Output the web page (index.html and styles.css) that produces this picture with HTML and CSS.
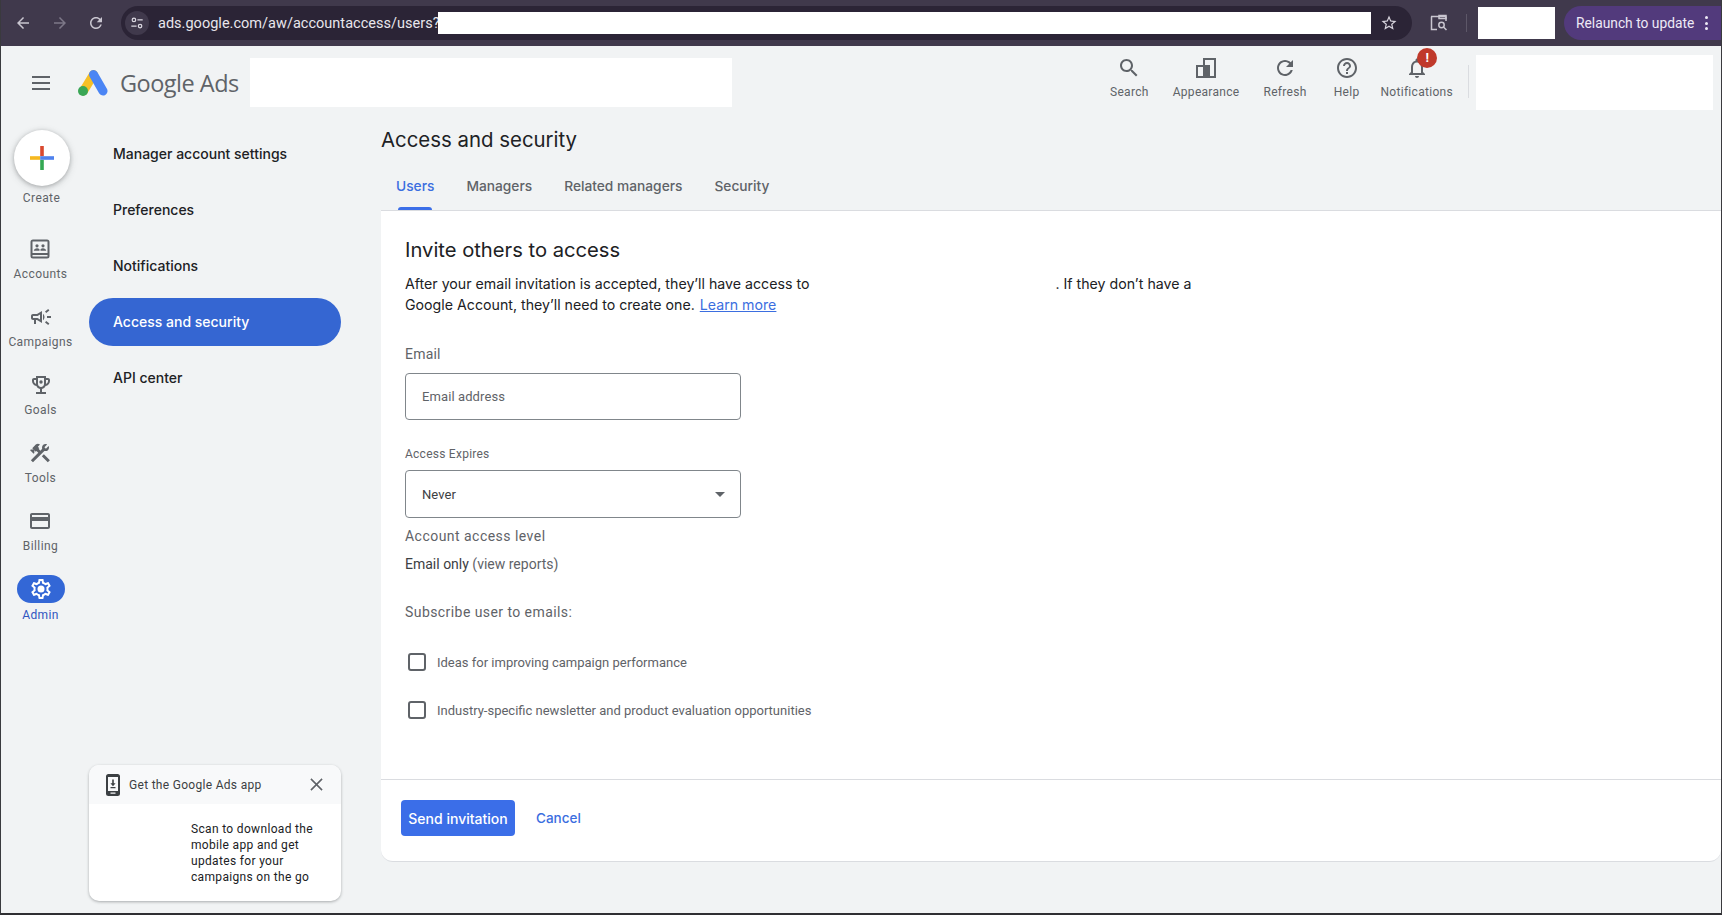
FILE: index.html
```html
<!DOCTYPE html>
<html lang="en">
<head>
<meta charset="utf-8">
<title>Access and security - Google Ads</title>
<link rel="stylesheet" href="styles.css">
</head>
<body>
<div class="window">
  <header class="chrome">
    <div class="chrome-nav">
      <svg class="c-icon" viewBox="0 0 24 24"><path d="M20 11H7.8l5.6-5.6L12 4l-8 8 8 8 1.4-1.4L7.8 13H20z"/></svg>
      <svg class="c-icon dim" viewBox="0 0 24 24"><path d="M4 11h12.2l-5.6-5.6L12 4l8 8-8 8-1.4-1.4 5.6-5.6H4z"/></svg>
      <svg class="c-icon" viewBox="0 0 24 24"><path d="M17.65 6.35C16.2 4.9 14.21 4 12 4c-4.42 0-7.99 3.58-7.99 8s3.57 8 7.99 8c3.73 0 6.84-2.55 7.73-6h-2.08c-.82 2.33-3.04 4-5.65 4-3.31 0-6-2.69-6-6s2.69-6 6-6c1.66 0 3.14.69 4.22 1.78L13 11h7V4l-2.35 2.35z"/></svg>
    </div>
    <div class="omnibox">
      <span class="tune">
        <svg viewBox="0 0 16 16" class="tune-svg"><circle cx="4.5" cy="4.5" r="2"/><path d="M8.5 4.5h6M1.5 11.5h6"/><circle cx="11.5" cy="11.5" r="2"/></svg>
      </span>
      <span class="url">ads.google.com/aw/accountaccess/users?</span>
      <span class="url-mask"></span>
      <svg class="star" viewBox="0 0 24 24"><path d="M22 9.24l-7.19-.62L12 2 9.19 8.63 2 9.24l5.46 4.73L5.82 21 12 17.27 18.18 21l-1.63-7.03L22 9.24zM12 15.4l-3.76 2.27 1-4.28-3.32-2.88 4.38-.38L12 6.1l1.71 4.04 4.38.38-3.32 2.88 1 4.28L12 15.4z"/></svg>
    </div>
    <svg class="tabsearch" viewBox="0 0 18 18"><path d="M1 2.5h15M1.5 2.5v13H7M16 2.5V7"/><rect x="9" y="1.5" width="7" height="3"/><circle cx="11.5" cy="11" r="2.7"/><path d="M13.5 13l3 3"/></svg>
    <span class="chrome-sep"></span>
    <span class="profile-mask"></span>
    <div class="relaunch"><span>Relaunch to update</span><span class="kebab"><i></i><i></i><i></i></span></div>
  </header>

  <div class="topbar">
    <div class="burger"><i></i><i></i><i></i></div>
    <svg class="logo" viewBox="0 0 30 27">
      <path class="logo-y" d="M15.5 5.5 5.5 22"/>
      <path class="logo-b" d="M15.5 5.5 25 22"/>
      <circle class="logo-g" cx="5" cy="22" r="5"/>
    </svg>
    <span class="brand">Google Ads</span>
    <span class="account-mask"></span>
    <nav class="tools">
      <a class="tool">
        <svg class="icon" viewBox="0 0 24 24"><path d="M15.5 14h-.79l-.28-.27C15.41 12.59 16 11.11 16 9.5 16 5.91 13.09 3 9.5 3S3 5.91 3 9.5 5.91 16 9.5 16c1.61 0 3.09-.59 4.23-1.57l.27.28v.79l5 4.99L20.49 19l-4.99-5zm-6 0C7.01 14 5 11.99 5 9.5S7.01 5 9.5 5 14 7.01 14 9.5 11.99 14 9.5 14z"/></svg>
        <span>Search</span>
      </a>
      <a class="tool">
        <svg class="icon" viewBox="0 0 24 24"><path d="M9 2h13v20H2V9h7V2zm2 2v16h9V4h-9zM4 11v9h5v-9H4z" fill-rule="evenodd"/><path d="M11 9h5v11h-5z"/></svg>
        <span>Appearance</span>
      </a>
      <a class="tool">
        <svg class="icon" viewBox="0 0 24 24"><path d="M17.65 6.35C16.2 4.9 14.21 4 12 4c-4.42 0-7.99 3.58-7.99 8s3.57 8 7.99 8c3.73 0 6.84-2.55 7.73-6h-2.08c-.82 2.33-3.04 4-5.65 4-3.31 0-6-2.69-6-6s2.69-6 6-6c1.66 0 3.14.69 4.22 1.78L13 11h7V4l-2.35 2.35z"/></svg>
        <span>Refresh</span>
      </a>
      <a class="tool tool-help">
        <svg class="icon" viewBox="0 0 24 24"><path d="M11 18h2v-2h-2v2zm1-16C6.48 2 2 6.48 2 12s4.48 10 10 10 10-4.48 10-10S17.52 2 12 2zm0 18c-4.41 0-8-3.59-8-8s3.59-8 8-8 8 3.59 8 8-3.59 8-8 8zm0-14c-2.21 0-4 1.79-4 4h2c0-1.1.9-2 2-2s2 .9 2 2c0 2-3 1.75-3 5h2c0-2.25 3-2.5 3-5 0-2.21-1.79-4-4-4z"/></svg>
        <span>Help</span>
      </a>
      <a class="tool tool-bell">
        <svg class="icon" viewBox="0 0 24 24"><path d="M12 22c1.1 0 2-.9 2-2h-4c0 1.1.9 2 2 2zm6-6v-5c0-3.07-1.63-5.64-4.5-6.32V4c0-.83-.67-1.5-1.5-1.5s-1.5.67-1.5 1.5v.68C7.64 5.36 6 7.92 6 11v5l-2 2v1h16v-1l-2-2zm-2 1H8v-6c0-2.48 1.51-4.5 4-4.5s4 2.02 4 4.5v6z"/></svg>
        <b class="badge">!</b>
        <span>Notifications</span>
      </a>
    </nav>
    <span class="tool-sep"></span>
    <span class="user-mask"></span>
  </div>

  <div class="workspace">
    <aside class="rail">
      <a class="rail-create">
        <span class="fab">
          <svg viewBox="0 0 24 24" class="plus">
            <rect x="10.2" width="3.6" height="10.2" fill="#d9492f"/>
            <rect y="10.2" width="10.2" height="3.6" fill="#f6b81f"/>
            <rect x="10.2" y="13.8" width="3.6" height="10.2" fill="#34a853"/>
            <rect x="10.2" y="10.2" width="13.8" height="3.6" fill="#4f82ee"/>
          </svg>
        </span>
        <span>Create</span>
      </a>
      <a class="rail-item">
        <svg class="icon" viewBox="0 0 24 24"><path d="M5 2.5h14A2.5 2.5 0 0 1 21.5 5v14a2.5 2.5 0 0 1-2.5 2.5H5A2.5 2.5 0 0 1 2.5 19V5A2.5 2.5 0 0 1 5 2.5zm-.5 2V16h15V4.500zm0 13.500v1.500h15V18z" fill-rule="evenodd"/><circle cx="9" cy="8.800" r="1.600"/><circle cx="15" cy="8.800" r="1.600"/><path d="M5.800 13.800c0-1.600 1.800-2.500 3.200-2.500.9 0 1.900.3 2.500.9v1.600zM12.500 12.200c.6-.6 1.600-.9 2.500-.9 1.400 0 3.200.9 3.200 2.500h-5.700z"/></svg>
        <span>Accounts</span>
      </a>
      <a class="rail-item">
        <svg class="icon" viewBox="0 0 24 24"><path d="M18 11v2h4v-2h-4zm-2 6.610c.96.710 2.210 1.650 3.200 2.390.4-.530.8-1.070 1.200-1.600-.99-.740-2.240-1.680-3.200-2.400-.4.540-.8 1.080-1.200 1.610zM20.400 5.600c-.4-.530-.8-1.070-1.200-1.600-.99.740-2.240 1.680-3.200 2.400.4.530.8 1.070 1.200 1.600.96-.720 2.210-1.650 3.200-2.400zM4 9c-1.100 0-2 .9-2 2v2c0 1.100.9 2 2 2h1v4h2v-4h1l5 3V6L8 9H4zm5.030 1.710L11 9.530v4.940l-1.970-1.180-.48-.29H4v-2h4.550l.48-.29zM15.500 12c0-1.330-.58-2.530-1.500-3.350v6.690c.92-.81 1.500-2.010 1.500-3.340z"/></svg>
        <span>Campaigns</span>
      </a>
      <a class="rail-item">
        <svg class="icon" viewBox="0 0 24 24"><path d="M19 5h-2V3H7v2H5c-1.100 0-2 .9-2 2v1c0 2.550 1.920 4.630 4.390 4.940.63 1.500 1.980 2.630 3.610 2.960V19H7v2h10v-2h-4v-3.100c1.630-.33 2.980-1.460 3.610-2.960C19.080 12.630 21 10.550 21 8V7c0-1.100-.9-2-2-2zM5 8V7h2v3.820C5.840 10.400 5 9.300 5 8zm14 0c0 1.300-.84 2.400-2 2.820V7h2v1zm-7 6c-1.650 0-3-1.350-3-3V5h6v6c0 1.650-1.350 3-3 3z"/><circle cx="12" cy="9" r="1.700"/></svg>
        <span>Goals</span>
      </a>
      <a class="rail-item">
        <svg class="icon" viewBox="0 0 24 24"><path d="M13.780 15.300L19.780 21.300L21.890 19.140L15.890 13.140L13.780 15.300ZM17.500 10.100C17.110 10.100 16.690 10.050 16.360 9.910L4.970 21.250L2.860 19.140L10.270 11.740L8.500 9.960L7.780 10.660L6.330 9.250V12.110L5.630 12.810L2.110 9.250L2.810 8.550H5.620L4.220 7.140L7.780 3.580C8.950 2.410 10.830 2.410 12 3.580L9.890 5.740L11.300 7.140L10.590 7.850L12.380 9.630L14.200 7.750C14.060 7.420 14 7 14 6.630C14 4.660 15.560 3.110 17.500 3.110C18.090 3.110 18.610 3.250 19.080 3.530L16.410 6.200L17.910 7.700L20.580 5.030C20.860 5.500 21 6 21 6.630C21 8.550 19.450 10.100 17.500 10.100Z"/></svg>
        <span>Tools</span>
      </a>
      <a class="rail-item">
        <svg class="icon" viewBox="0 0 24 24"><path d="M20 4H4c-1.110 0-1.990.89-1.990 2L2 18c0 1.110.89 2 2 2h16c1.110 0 2-.89 2-2V6c0-1.110-.89-2-2-2zm0 14H4v-6h16v6zm0-10H4V6h16v2z"/></svg>
        <span>Billing</span>
      </a>
      <a class="rail-item rail-active">
        <span class="rail-pill">
          <svg class="icon" viewBox="0 0 24 24"><path d="M19.430 12.980c.04-.32.07-.64.07-.98 0-.34-.03-.66-.07-.98l2.110-1.650c.19-.15.24-.42.12-.64l-2-3.460c-.09-.16-.26-.25-.44-.25-.06 0-.12.01-.17.03l-2.490 1c-.52-.4-1.080-.73-1.690-.98l-.38-2.650C14.460 2.180 14.250 2 14 2h-4c-.25 0-.46.18-.49.42l-.38 2.650c-.61.25-1.170.59-1.690.98l-2.490-1c-.06-.02-.12-.03-.18-.03-.17 0-.34.09-.43.25l-2 3.460c-.13.22-.07.49.12.64l2.110 1.650c-.04.32-.07.65-.07.98 0 .33.03.66.07.98l-2.110 1.650c-.19.15-.24.42-.12.64l2 3.460c.09.16.26.25.44.25.06 0 .12-.01.17-.03l2.490-1c.52.4 1.080.73 1.690.98l.38 2.650c.03.24.24.42.49.42h4c.25 0 .46-.18.49-.42l.38-2.650c.61-.25 1.170-.59 1.690-.98l2.490 1c.06.02.12.03.18.03.17 0 .34-.09.43-.25l2-3.460c.12-.22.07-.49-.12-.64l-2.110-1.650zm-1.980-1.710c.04.31.05.52.05.730 0 .21-.02.43-.05.73l-.14 1.130.89.7 1.080.84-.7 1.210-1.270-.51-1.040-.42-.9.68c-.43.32-.84.56-1.250.73l-1.060.43-.16 1.130-.2 1.350h-1.400l-.19-1.350-.16-1.130-1.060-.43c-.43-.18-.83-.41-1.230-.71l-.91-.7-1.060.43-1.270.51-.7-1.210 1.080-.84.89-.7-.14-1.130c-.03-.31-.05-.54-.05-.74s.02-.43.05-.73l.14-1.130-.89-.7-1.080-.84.7-1.210 1.270.51 1.040.42.9-.68c.43-.32.84-.56 1.250-.73l1.060-.43.16-1.130.2-1.350h1.390l.19 1.350.16 1.130 1.060.43c.43.18.83.41 1.230.71l.91.7 1.060-.43 1.270-.51.7 1.210-1.070.85-.89.7.14 1.130z"/><circle cx="12" cy="12" r="3.500"/></svg>
        </span>
        <span>Admin</span>
      </a>
    </aside>

    <aside class="sidenav">
      <a class="side-link"><span>Manager account settings</span></a>
      <a class="side-link"><span>Preferences</span></a>
      <a class="side-link"><span>Notifications</span></a>
      <a class="side-link side-active"><span>Access and security</span></a>
      <a class="side-link"><span>API center</span></a>
      <section class="app-promo">
        <div class="promo-head">
          <svg class="phone" viewBox="0 0 14 22"><path d="M2.500 0h9A2.500 2.500 0 0 1 14 2.500v17a2.500 2.500 0 0 1-2.500 2.500h-9A2.500 2.500 0 0 1 0 19.500v-17A2.500 2.500 0 0 1 2.500 0zM2 3v14h10V3zm2.500 15.500v1.300h5v-1.300z" fill-rule="evenodd"/><path d="M6.200 5.500h1.600v3.700h1.800L7 12.200 4.400 9.200h1.800zM4.500 13h5v1.200h-5z"/></svg>
          <span class="promo-title">Get the Google Ads app</span>
          <svg class="promo-close" viewBox="0 0 14 14"><path d="M1 1l12 12M13 1L1 13"/></svg>
        </div>
        <p class="promo-text">Scan to download the mobile app and get updates for your campaigns on the go</p>
      </section>
    </aside>

    <main class="main">
      <h1 class="page-title">Access and security</h1>
      <div class="tabs">
        <a class="tab tab-active">Users</a>
        <a class="tab">Managers</a>
        <a class="tab">Related managers</a>
        <a class="tab">Security</a>
      </div>
      <section class="card">
        <div class="card-body">
          <h2 class="card-title">Invite others to access</h2>
          <p class="intro">After your email invitation is accepted, they’ll have access to<span class="redacted"></span>. If they don’t have a<br>Google Account, they’ll need to create one. <a class="link">Learn more</a></p>
          <div class="label-email">Email</div>
          <div class="field field-email"><span class="placeholder">Email address</span></div>
          <div class="label-expires">Access Expires</div>
          <div class="field field-select"><span class="value">Never</span><i class="caret"></i></div>
          <div class="label-level">Account access level</div>
          <div class="level">Email only <span>(view reports)</span></div>
          <div class="label-sub">Subscribe user to emails:</div>
          <label class="check first"><i class="box"></i><span>Ideas for improving campaign performance</span></label>
          <label class="check"><i class="box"></i><span>Industry-specific newsletter and product evaluation opportunities</span></label>
        </div>
        <footer class="card-foot">
          <a class="btn">Send invitation</a>
          <a class="cancel">Cancel</a>
        </footer>
      </section>
    </main>
  </div>
</div>
</body>
</html>
```

FILE: styles.css
```css
* { box-sizing: border-box; }
html, body { margin: 0; height: 100%; }
body { font-family: "Roboto", "Liberation Sans", sans-serif; background: #2f2f33; overflow: hidden; }
a { display: block; }
i { display: block; }
p, h1, h2 { margin: 0; font-weight: 400; }

.window { width: 1722px; height: 915px; border-left: 1px solid #3a3a3e; border-right: 1px solid #3a3a3e; border-bottom: 2px solid #2f2f33; display: flex; flex-direction: column; background: #f1f3f4; overflow: hidden; }

/* browser chrome */
.chrome { height: 46px; flex: none; background: #40394c; display: flex; align-items: center; padding-left: 13px; }
.chrome-nav { display: flex; gap: 18.500px; width: 107px; flex: none; }
.c-icon { width: 18px; height: 18px; fill: #c9c6d0; flex: none; }
.c-icon.dim { fill: #7d7888; }
.omnibox { width: 1291px; flex: none; height: 34px; border-radius: 17px; background: #2b2436; display: flex; align-items: center; padding-left: 4px; }
.tune { width: 24px; height: 24px; border-radius: 50%; background: #40394c; display: flex; align-items: center; justify-content: center; flex: none; }
.tune-svg { width: 14px; height: 14px; fill: none; stroke: #dcd9e2; stroke-width: 1.4; }
.url { color: #e8e6ec; font-size: 14.5px; margin-left: 9px; white-space: nowrap; flex: none; width: 280px; letter-spacing: .02px; }
.url-mask { width: 933px; height: 22px; background: #fff; flex: none; }
.star { width: 18px; height: 18px; fill: #d7d4dd; margin-left: 9px; flex: none; }
.tabsearch { width: 18px; height: 18px; fill: none; stroke: #c9c6d0; stroke-width: 1.5; margin-left: 18px; flex: none; }
.chrome-sep { width: 1px; height: 18px; background: #5d5768; margin-left: 18px; flex: none; }
.profile-mask { width: 77px; height: 32px; background: #fff; margin-left: 11px; flex: none; }
.relaunch { margin-left: 9px; flex: 1; height: 34px; border-radius: 17px 0 0 17px; background: #523a7c; color: #eee9f6; font-size: 13.800px; display: flex; align-items: center; padding-left: 12px; white-space: nowrap; }
.kebab { margin-left: 11px; display: flex; flex-direction: column; gap: 2.500px; }
.kebab i { width: 3px; height: 3px; border-radius: 50%; background: #eee9f6; }

/* top bar */
.topbar { height: 69px; flex: none; display: flex; align-items: center; padding: 4px 0 0 31px; position: relative; }
.burger { width: 18px; display: flex; flex-direction: column; gap: 4px; flex: none; }
.burger i { height: 2px; background: #5f6368; }
.logo { width: 30px; height: 27px; margin-left: 28px; flex: none; }
.logo-y { stroke: #f6c026; stroke-width: 9; stroke-linecap: round; fill: none; }
.logo-b { stroke: #4b85f4; stroke-width: 9; stroke-linecap: round; fill: none; }
.logo-g { fill: #3aa655; }
.brand { margin-left: 12px; font-family: "Open Sans", sans-serif; font-size: 23.500px; letter-spacing: -.5px; color: #5f6368; white-space: nowrap; width: 130px; flex: none; }
.account-mask { width: 482px; height: 49px; background: #fff; flex: none; }
.tools { margin-left: auto; margin-bottom: 10px; display: flex; gap: 24px; }
.tool { display: flex; flex-direction: column; align-items: center; font-size: 12px; color: #5f6368; letter-spacing: .3px; gap: 5px; position: relative; white-space: nowrap; }
.tool .icon { width: 24px; height: 24px; }
.tool-help { margin-left: 3px; margin-right: -3px; }
.tool-bell .badge { position: absolute; left: 37px; top: -8px; width: 20px; height: 20px; border-radius: 50%; background: #c0392b; color: #fff; font-size: 13px; line-height: 20px; text-align: center; font-weight: 700; }
.icon { fill: #5f6368; display: block; flex: none; }
.tool-sep { width: 1px; height: 33px; background: #dadce0; margin: 0 0 2px 15px; flex: none; }
.user-mask { width: 237px; height: 55px; background: #fff; margin-left: 7px; margin-right: 8px; flex: none; }

/* layout */
.workspace { flex: 1; display: flex; min-height: 0; }
.rail { width: 81px; flex: none; display: flex; flex-direction: column; align-items: center; padding: 15px 2px 0 0; }
.rail-create { display: flex; flex-direction: column; align-items: center; font-size: 12px; color: #5f6368; letter-spacing: .4px; margin: 0 0 32px 2px; }
.fab { width: 56px; height: 56px; border-radius: 50%; background: #fff; box-shadow: 0 1px 4px rgba(60,64,67,.35), 0 2px 8px rgba(60,64,67,.15); display: flex; align-items: center; justify-content: center; margin-bottom: 5px; }
.plus { width: 24px; height: 24px; }
.rail-item { height: 68px; display: flex; flex-direction: column; align-items: center; font-size: 12px; color: #5f6368; letter-spacing: .4px; }
.rail-item .icon { width: 24px; height: 24px; margin-bottom: 6px; }
.rail-active { color: #2f55c0; }
.rail-pill { width: 48px; height: 28px; border-radius: 14px; background: #3367d6; display: flex; align-items: center; justify-content: center; margin-top: -2px; margin-bottom: 5px; flex: none; }
.rail-pill .icon { fill: #fff; margin: 0; }

.sidenav { width: 299px; flex: none; display: flex; flex-direction: column; padding: 15px 0 12px 7px; }
.side-link { width: 252px; height: 48px; margin-bottom: 8px; border-radius: 24px; padding: 0 0 2px 24px; display: flex; align-items: center; font-family: "Inter", sans-serif; font-size: 14px; font-weight: 500; color: #202124; }
.side-active { background: #3566d2; color: #fff; }
.app-promo { margin-top: auto; width: 252px; height: 136px; border-radius: 10px; background: #fff; box-shadow: 0 1px 3px rgba(60,64,67,.4); overflow: hidden; }
.promo-head { height: 39px; background: #f8f9fa; display: flex; align-items: center; padding-left: 17px; }
.phone { width: 14px; height: 22px; fill: #3c4043; flex: none; }
.promo-title { margin-left: 9px; font-size: 12px; letter-spacing: .3px; color: #3c4043; white-space: nowrap; }
.promo-close { width: 13px; height: 13px; fill: none; stroke: #5f6368; stroke-width: 1.700; margin-left: auto; margin-right: 18px; }
.promo-text { margin: 17px 20px 0 102px; font-size: 12px; line-height: 16px; color: #202124; letter-spacing: .33px; }

.main { flex: 1; min-width: 0; display: flex; flex-direction: column; padding-bottom: 51px; }
.page-title { font-family: "Inter", sans-serif; font-size: 20.400px; line-height: 28px; margin-top: 11px; color: #202124; }
.tabs { display: flex; gap: 32px; height: 56px; padding-left: 15px; flex: none; }
.tab { font-family: "Inter", sans-serif; font-size: 13.750px; font-weight: 500; color: #5f6368; padding-top: 17px; line-height: 30px; position: relative; }
.tab-active { color: #3b6ee0; }
.tab-active::after { content: ""; position: absolute; left: 2px; right: 2px; bottom: 0; height: 3px; background: #3b6ee8; border-radius: 3px 3px 0 0; }
.card { flex: 1; background: #fff; border-top: 1px solid #dadce0; border-bottom: 1px solid #dadce0; border-radius: 0 0 12px 12px; display: flex; flex-direction: column; min-height: 0; }
.card-body { flex: 1; padding: 0 24px; }
.card-title { font-family: "Inter", sans-serif; font-size: 20.200px; line-height: 28px; color: #202124; margin-top: 25px; }
.intro { font-family: "Inter", sans-serif; font-size: 14.200px; line-height: 21px; color: #202124; margin-top: 9px; }
.redacted { display: inline-block; width: 246px; }
.link { display: inline; color: #3b6ee0; text-decoration: underline; margin-left: 1px; }
.label-email { font-size: 14px; line-height: 20px; color: #5f6368; margin-top: 29px; letter-spacing: .2px; }
.field { width: 336px; height: 47px; border: 1px solid #80868b; border-radius: 4px; padding: 0 16px; display: flex; align-items: center; font-size: 13px; letter-spacing: .1px; margin-top: 8px; }
.field-email { margin-top: 9px; }
.placeholder { color: #5f6368; }
.label-expires { font-size: 12px; line-height: 16px; color: #5f6368; margin-top: 26px; letter-spacing: .25px; }
.field-select { height: 48px; justify-content: space-between; color: #202124; }
.value { color: #3c4043; }
.caret { width: 0; height: 0; border: 5px solid transparent; border-top-color: #5f6368; border-bottom-width: 0; margin-right: -1px; }
.label-level { font-size: 14px; line-height: 20px; color: #5f6368; margin-top: 8px; letter-spacing: .47px; }
.level { font-size: 14px; line-height: 20px; color: #3c4043; margin-top: 8px; }
.level span { color: #5f6368; }
.label-sub { font-size: 14px; line-height: 20px; color: #5f6368; margin-top: 28px; letter-spacing: .43px; }
.check { display: flex; align-items: center; height: 18px; margin-top: 30px; padding-left: 3px; font-size: 13px; color: #5f6368; }
.check.first { margin-top: 31px; }
.box { width: 18px; height: 18px; border: 2px solid #5f6368; border-radius: 3px; margin-right: 11px; flex: none; }
.card-foot { height: 82px; flex: none; border-top: 1px solid #dadce0; display: flex; align-items: center; padding: 0 0 5px 20px; }
.btn { width: 114px; height: 36px; background: #3b6ee8; color: #fff; border-radius: 4px; font-family: "Inter", sans-serif; font-size: 14px; font-weight: 500; display: flex; align-items: center; justify-content: center; white-space: nowrap; }
.cancel { margin-left: 21px; color: #3b6ee0; font-family: "Inter", sans-serif; font-size: 13.500px; font-weight: 500; }
```
